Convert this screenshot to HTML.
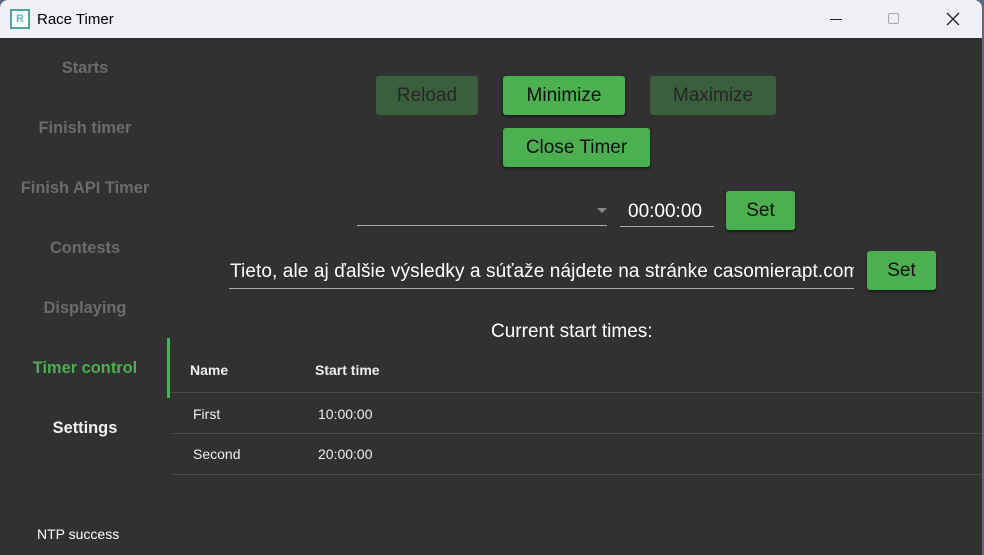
<!DOCTYPE html>
<html><head><meta charset="utf-8"><style>
*{margin:0;padding:0;box-sizing:border-box}
body{width:984px;height:555px;background:#5a6a80;font-family:"Liberation Sans",sans-serif;overflow:hidden;position:relative}
.win{position:absolute;left:0;top:0;width:982px;height:555px;background:#313131;border-radius:8px 8px 0 0;overflow:hidden}
.tb{position:absolute;left:0;top:0;width:982px;height:38px;background:#eff0f6}
.ab{position:absolute;font-size:15px;color:#000;font-weight:normal}
.side{position:absolute;left:0;width:170px;text-align:center;font-size:16.4px;font-weight:bold;color:#6b6b6b}
.btn{position:absolute;height:39px;border-radius:3px;font-size:19px;text-align:center;line-height:40px;color:#111}
.on{background:#4caf50;box-shadow:0 2px 3px rgba(0,0,0,.5)}
.off{background:#3b5e3c;color:#262626}
.t{position:absolute;color:#eee;font-size:15px}
.ln{position:absolute;height:1px;background:#4a4a4a;left:171px;width:811px}
</style></head><body>
<div class="win">
<div class="tb">
<div style="position:absolute;left:10px;top:9px;width:20px;height:20px;border:2px solid #4aa89c;background:#fff;font-size:11px;color:#6bb;text-align:center;line-height:16px;font-weight:bold">R</div>
<div class="ab" style="left:37px;top:11px;font-size:15px">Race Timer</div>
<div style="position:absolute;left:830px;top:19px;width:12px;height:1px;background:#222"></div>
<div style="position:absolute;left:888px;top:13px;width:11px;height:11px;border:1px solid #aaa;border-radius:2px"></div>
<svg style="position:absolute;left:946px;top:12px" width="14" height="14"><path d="M1 1L13 13M13 1L1 13" stroke="#222" stroke-width="1.3"/></svg>
</div>
<div class="side" style="top:59px">Starts</div>
<div class="side" style="top:119px">Finish timer</div>
<div class="side" style="top:179px">Finish API Timer</div>
<div class="side" style="top:239px">Contests</div>
<div class="side" style="top:299px">Displaying</div>
<div class="side" style="top:359px;color:#4caf50">Timer control</div>
<div class="side" style="top:419px;color:#f0f0f0">Settings</div>
<div class="t" style="left:37px;top:526px;font-size:14px;color:#fff">NTP success</div>
<div style="position:absolute;left:167px;top:338px;width:3px;height:60px;background:#4caf50"></div>

<div class="btn off" style="left:376px;top:76px;width:102px">Reload</div>
<div class="btn on" style="left:503px;top:76px;width:122px">Minimize</div>
<div class="btn off" style="left:650px;top:76px;width:126px">Maximize</div>
<div class="btn on" style="left:503px;top:128px;width:147px">Close Timer</div>

<div style="position:absolute;left:357px;top:225px;width:250px;height:1px;background:#aaa"></div>
<div style="position:absolute;left:597px;top:208px;border-left:5px solid transparent;border-right:5px solid transparent;border-top:5px solid #888"></div>
<div class="t" style="left:628px;top:201px;font-size:19px;color:#fff">00:00:00</div>
<div style="position:absolute;left:620px;top:226px;width:94px;height:1px;background:#aaa"></div>
<div class="btn on" style="left:726px;top:191px;width:69px">Set</div>

<div class="t" style="left:230px;top:261px;font-size:19px;color:#fff;width:624px;overflow:hidden;white-space:nowrap;letter-spacing:0.1px">Tieto, ale aj ďalšie výsledky a súťaže nájdete na stránke casomierapt.com</div>
<div style="position:absolute;left:229px;top:288px;width:625px;height:1px;background:#aaa"></div>
<div class="btn on" style="left:867px;top:251px;width:69px">Set</div>

<div class="t" style="left:491px;top:321px;font-size:19px;color:#fff">Current start times:</div>
<div class="t" style="left:190px;top:362px;font-weight:bold;font-size:14px">Name</div>
<div class="t" style="left:315px;top:362px;font-weight:bold;font-size:14px">Start time</div>
<div class="ln" style="top:392px"></div>
<div class="t" style="left:193px;top:406px;font-size:14px">First</div>
<div class="t" style="left:318px;top:406px;font-size:14px">10:00:00</div>
<div class="ln" style="top:433px"></div>
<div class="t" style="left:193px;top:446px;font-size:14px">Second</div>
<div class="t" style="left:318px;top:446px;font-size:14px">20:00:00</div>
<div class="ln" style="top:474px"></div>
</div>
</body></html>
